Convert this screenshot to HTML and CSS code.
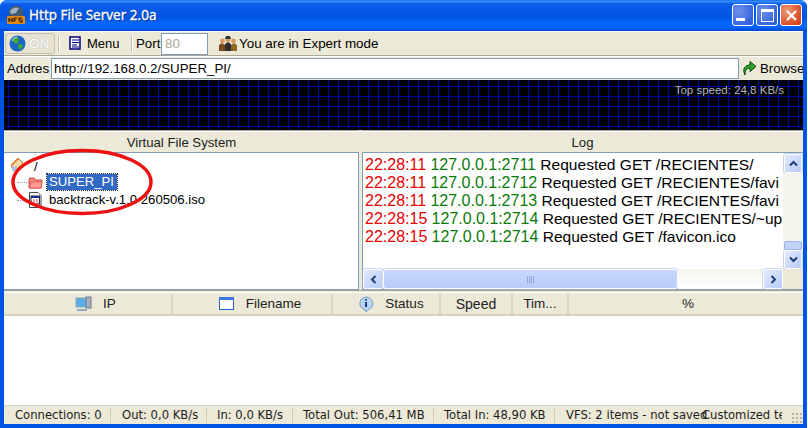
FILE: index.html
```html
<!DOCTYPE html>
<html lang="en">
<head>
<meta charset="utf-8">
<title>Http File Server 2.0a</title>
<link rel="stylesheet" href="styles.css">
</head>
<body>
<div class="window">
  <header class="titlebar">
    <svg class="hfs-logo" width="20" height="20" viewBox="0 0 20 20">
      <circle cx="10" cy="8" r="7.500" fill="#46586e"/>
      <path d="M4 6 Q8 1 13 3 L10 8 L5 9Z" fill="#9fb4c4"/>
      <rect x="1" y="11" width="18" height="8" rx="1" fill="#e08a10"/>
      <path d="M3 13v4M3 15h3M6 13v4M8 13v4M8 13h3M8 15h2M16 13h-3v2h3v2h-3" stroke="#3a1c00" stroke-width="1.200" fill="none"/>
    </svg>
    <span class="title">Http File Server 2.0a</span>
    <div class="caption-buttons">
      <button class="cap cap-blue"><span class="glyph-min"></span></button>
      <button class="cap cap-blue"><span class="glyph-max"></span></button>
      <button class="cap cap-red">
        <svg width="13" height="13" viewBox="0 0 13 13"><path d="M2 2 L11 11 M11 2 L2 11" stroke="#fff" stroke-width="2.200"/></svg>
      </button>
    </div>
  </header>

  <div class="body">
    <div class="toolbar">
      <div class="on-button">
        <svg width="17" height="17" viewBox="0 0 17 17">
          <circle cx="8.500" cy="8.500" r="8" fill="#1a66c8"/>
          <path d="M3 4 Q6 1 9 2 L10 6 L8 9 L5 8Z M9 10 L13 9 L14 12 L10 15Z" fill="#45a82f"/>
          <path d="M3 6 Q5 2 8 2" stroke="#bfe0ff" fill="none"/>
        </svg>
        <span class="on-label">ON</span>
      </div>
      <span class="sep"></span>
      <svg class="menu-icon" width="13" height="15" viewBox="0 0 13 15">
        <rect x="1" y="1" width="10" height="12" fill="#fff" stroke="#00007a" stroke-width="1.500"/>
        <path d="M3 4h7M3 6.500h7M3 9h5M3 11h7" stroke="#00007a" stroke-width="1.200"/>
      </svg>
      <span class="menu-label">Menu</span>
      <span class="sep"></span>
      <label class="port-label">Port</label>
      <div class="port-input">80</div>
      <svg class="expert-icon" width="18" height="16" viewBox="0 0 18 16">
        <path d="M0 15V9l3-2 3 2v6Z" fill="#7a4a18"/><circle cx="3.500" cy="5" r="2.400" fill="#d89a60"/>
        <path d="M6 15V8l3-2 3 2v7Z" fill="#2e2e2e"/><circle cx="9" cy="4" r="2.400" fill="#d89a60"/><path d="M6 3h6l-1-3H7Z" fill="#333"/>
        <path d="M12 15V9l3-2 3 2v6Z" fill="#8a6a20"/><circle cx="14.500" cy="5" r="2.400" fill="#d89a60"/>
      </svg>
      <span class="expert-label">You are in Expert mode</span>
    </div>

    <div class="address-bar">
      <span class="address-label">Addres</span>
      <div class="address-input">http://192.168.0.2/SUPER_PI/</div>
      <svg class="browse-icon" width="15" height="16" viewBox="0 0 15 16">
        <path d="M3 15 C0 9 3 5 8 5 V1.500 L14 6.500 L8 11.500 V8 C5 8 3 10 3 15Z" fill="#2da52d" stroke="#0a4a0a" stroke-width="1"/>
      </svg>
      <span class="browse-label">Browse</span>
    </div>

    <div class="graph"><span class="top-speed">Top speed: 24,8 KB/s</span></div>

    <div class="panes">
      <section class="pane pane-vfs">
        <h2 class="pane-title">Virtual File System</h2>
        <div class="tree">
          <div class="node root">
            <svg width="17" height="17" viewBox="0 0 17 17"><path d="M2 9 L9 2 L14 7 V8 L9 14 L3 12Z" fill="#f2d9a8" stroke="#c07a30"/><path d="M2 9 L9 2 L10 3 L3 10Z" fill="#e8843a"/><path d="M3 10v5l5 1v-5Z" fill="#a9c4e0"/></svg>
            <span class="node-text root-text">/</span>
          </div>
          <div class="node child">
            <span class="dots"></span>
            <svg width="15" height="13" viewBox="0 0 15 13"><path d="M1 3 L1 12 H13 L14 4 H7 L6 2 H2Z" fill="#f78a80" stroke="#d0403a"/><path d="M1.500 12 L3 6 H14 L13 12Z" fill="#ff9a90" stroke="#e0605a"/></svg>
            <span class="node-text selected">SUPER_PI</span>
          </div>
          <div class="node child">
            <span class="dots"></span>
            <svg width="14" height="16" viewBox="0 0 14 16"><path d="M1.500 .5 H10 L13 3.500 V15.500 H1.500Z" fill="#fff" stroke="#444"/><rect x="3" y="4" width="8.500" height="8" fill="#fff" stroke="#223"/><rect x="3" y="4" width="8.500" height="2" fill="#1a2a88"/><path d="M5 8h1.500M8 8h2M5 10h2M8.500 10h1.500" stroke="#c33" stroke-width="1"/></svg>
            <span class="node-text">backtrack-v.1.0 260506.iso</span>
          </div>
        </div>
        <svg class="highlight" width="146" height="70" viewBox="0 0 146 70">
          <ellipse cx="73" cy="35" rx="69" ry="31.500" fill="none" stroke="#ee1111" stroke-width="3.500"/>
        </svg>
      </section>
      <section class="pane pane-log">
        <h2 class="pane-title">Log</h2>
        <div class="log-box">
          <div class="log-main">
            <div class="log-lines">
              <div class="log-line"><span class="t">22:28:11</span> <span class="a">127.0.0.1:2711</span> Requested GET /RECIENTES/</div>
              <div class="log-line"><span class="t">22:28:11</span> <span class="a">127.0.0.1:2712</span> Requested GET /RECIENTES/favi</div>
              <div class="log-line"><span class="t">22:28:11</span> <span class="a">127.0.0.1:2713</span> Requested GET /RECIENTES/favi</div>
              <div class="log-line"><span class="t">22:28:15</span> <span class="a">127.0.0.1:2714</span> Requested GET /RECIENTES/~up</div>
              <div class="log-line"><span class="t">22:28:15</span> <span class="a">127.0.0.1:2714</span> Requested GET /favicon.ico</div>
            </div>
            <div class="vscroll">
              <div class="sb-btn"><svg width="9" height="7" viewBox="0 0 9 7"><path d="M1 5.500 L4.500 2 L8 5.500" fill="none" stroke="#1c3f78" stroke-width="2"/></svg></div>
              <div class="v-track"></div>
              <div class="v-thumb"></div>
              <div class="sb-btn"><svg width="9" height="7" viewBox="0 0 9 7"><path d="M1 1.500 L4.500 5 L8 1.500" fill="none" stroke="#1c3f78" stroke-width="2"/></svg></div>
            </div>
          </div>
          <div class="hscroll">
            <div class="sb-btn sb-btn-h"><svg width="7" height="9" viewBox="0 0 7 9"><path d="M5.500 1 L2 4.500 L5.500 8" fill="none" stroke="#1c3f78" stroke-width="2"/></svg></div>
            <div class="h-thumb"><span class="grip"></span></div>
            <div class="h-track"></div>
            <div class="sb-btn sb-btn-h"><svg width="7" height="9" viewBox="0 0 7 9"><path d="M1.500 1 L5 4.500 L1.500 8" fill="none" stroke="#1c3f78" stroke-width="2"/></svg></div>
            <div class="h-corner"></div>
          </div>
        </div>
      </section>
    </div>

    <div class="list-header">
      <div class="col col-ip">
        <svg width="17" height="16" viewBox="0 0 17 16"><rect x="1" y="2" width="11" height="9" fill="#5aaee8" stroke="#8aa"/><rect x="11" y="1" width="5" height="11" fill="#9fb2c4" stroke="#778"/><path d="M2 14h10" stroke="#9ab" stroke-width="2"/></svg>
        <span>IP</span>
      </div>
      <div class="col col-file">
        <svg width="15" height="13" viewBox="0 0 15 13"><rect x=".5" y=".5" width="14" height="12" fill="#fff" stroke="#2a62c8"/><rect x="0" y="0" width="15" height="3" fill="#3a78e0"/></svg>
        <span>Filename</span>
      </div>
      <div class="col col-status">
        <svg width="16" height="16" viewBox="0 0 16 16"><path d="M8 1a7 6.500 0 0 1 2 12.700L8 16l-1-2.300A7 6.500 0 0 1 8 1Z" fill="#b8d4f0" stroke="#7d9cc0"/><path d="M8 3v1.500M8 6v5" stroke="#123a8a" stroke-width="2"/></svg>
        <span>Status</span>
      </div>
      <div class="col col-speed"><span>Speed</span></div>
      <div class="col col-time"><span>Tim...</span></div>
      <div class="col col-pct"><span>%</span></div>
    </div>

    <div class="list-body"></div>

    <footer class="statusbar">
      <span class="st st-1">Connections: 0</span>
      <span class="st st-2">Out: 0,0 KB/s</span>
      <span class="st st-3">In: 0,0 KB/s</span>
      <span class="st st-4">Total Out: 506,41 MB</span>
      <span class="st st-5">Total In: 48,90 KB</span>
      <span class="st st-6">VFS: 2 items - not saved</span>
      <span class="st st-7">Customized te</span>
      <span class="grip-corner"></span>
    </footer>
  </div>
</div>
</body>
</html>
```

FILE: styles.css
```css
* { box-sizing: border-box; margin: 0; padding: 0; }
html, body { width: 808px; height: 428px; overflow: hidden; background: #fff; }
body { font-family: "Liberation Sans", Arial, sans-serif; font-size: 13.300px; color: #000; }

.window {
  width: 807px; height: 428px; display: flex; flex-direction: column;
  background: #0054e3; border-radius: 7px 7px 0 0; overflow: hidden;
}

.titlebar {
  height: 31px; flex: none; display: flex; align-items: center; padding: 0 5px 1px 6px;
  background: linear-gradient(#0a5ee4 0, #3d95ff 1px, #0a5de8 4px, #0056e0 18px, #0265f8 22px, #0365ff 27px, #0047cc 31px);
}
.hfs-logo { flex: none; }
.title {
  margin-left: 3px; font: 400 13.500px "Noto Sans", "Liberation Sans", sans-serif; color: #fff;
  text-shadow: 1px 1px 0 #0a2a90; -webkit-text-stroke: .3px #fff;
}
.caption-buttons { margin-left: auto; display: flex; gap: 2px; }
.cap {
  width: 22px; height: 22px; border: 1px solid #fff; border-radius: 3px;
  display: flex; align-items: center; justify-content: center; position: relative;
}
.cap-blue { background: radial-gradient(circle at 30% 30%, #6f92ee, #2f5fdc 80%); }
.cap-red { background: radial-gradient(circle at 30% 30%, #f09a78, #d8451c 80%); }
.glyph-min { width: 9px; height: 3px; background: #fff; align-self: flex-end; margin: 0 5px 4px 0; }
.glyph-max { width: 13px; height: 13px; border: 1px solid #fff; border-top-width: 3px; }

.body {
  flex: 1; min-height: 0; margin: 0 4px 4px 4px; background: #ece9d8;
  display: flex; flex-direction: column;
}

.toolbar {
  height: 25px; flex: none; display: flex; align-items: center; padding: 1px 0 0 0;
  border-bottom: 1px solid #aca899;
  box-shadow: inset 0 1px 0 #fff;
}
.on-button {
  width: 50px; height: 21px; margin-left: 1px; border: 1px solid #c4c1b0; border-radius: 3px;
  display: flex; align-items: center; padding-left: 3px; background: #e6e3d3;
}
.on-label { margin-left: 3px; color: #fff; font-size: 13.500px; text-shadow: 0 0 1px #aaa; }
.sep { width: 2px; height: 17px; flex: none; border-left: 1px solid #c5c2b2; border-right: 1px solid #fff; }
.on-button + .sep { margin-left: 3px; }
.menu-icon { margin-left: 9px; flex: none; }
.menu-label { margin-left: 5px; width: 33px; font-size: 13px; }
.menu-label + .sep { margin-left: 11px; }
.port-label { margin-left: 3px; width: 25px; }
.port-input {
  width: 47px; height: 22px; border: 1px solid #7f9db9; background: #fff; color: #a9a79a;
  padding-left: 3px; line-height: 20px; flex: none;
}
.expert-icon { margin-left: 11px; flex: none; }
.expert-label { margin-left: 2px; font-size: 13.400px; }

.address-bar {
  height: 24px; flex: none; display: flex; align-items: center; overflow: hidden;
  box-shadow: inset 0 1px 0 #fff;
}
.address-label { margin-left: 3px; width: 44px; overflow: hidden; flex: none; }
.address-input {
  width: 688px; height: 21px; flex: none; border: 1px solid #7f9db9; background: #fff;
  padding-left: 2px; line-height: 19px;
}
.browse-icon { margin-left: 3px; flex: none; }
.browse-label { margin-left: 3px; flex: none; }

.graph {
  height: 50px; flex: none; display: flex; justify-content: flex-end; align-items: flex-start;
  background-color: #000;
  background-image:
    linear-gradient(to right, #0000a0 1px, transparent 1px),
    linear-gradient(to bottom, #0000a0 1px, transparent 1px);
  background-size: 10px 10px;
  background-position: 4px 6px;
  padding: 3px 19px 0 0;
}
.top-speed { font-size: 11.500px; color: #b4b4b4; line-height: 14px; }

.panes { height: 161px; flex: none; display: flex; gap: 3px; border-bottom: 1px solid #aca899; }
.pane { display: flex; flex-direction: column; position: relative; min-width: 0; }
.pane-vfs { width: 355px; flex: none; }
.pane-log { flex: 1; }
.pane-title {
  height: 22px; flex: none; text-align: center; font-weight: 400; font-size: 13.200px; line-height: 23px;
  color: #222; border-top: 1px solid #aca899; box-shadow: inset 0 1px 0 #fff;
}
.tree {
  flex: 1; background: #fff; border: 1px solid #7f9db9; border-width: 1px 1px 1px 0; padding: 2px 0 0 5px;
}
.node { height: 18px; display: flex; align-items: center; white-space: nowrap; font-size: 13.150px; }
.root-text { margin-left: 6px; margin-top: 5px; }
.child { padding-left: 8px; }
.dots { width: 10px; border-top: 1px dotted #999; flex: none; margin-right: 1px; }
.child svg { flex: none; margin-right: 4px; }
.node-text { padding: 0 2px; line-height: 16px; }
.node:last-child .node-text { margin-left: 1px; }
.selected { background: #316ac5; color: #fff; outline: 1px dotted #222; padding: 0 3px 0 2px; }
.highlight { position: absolute; left: 5px; top: 17px; pointer-events: none; }

.log-box { flex: 1; min-height: 0; background: #fff; border: 1px solid #7f9db9; border-width: 1px 0 1px 1px; display: flex; flex-direction: column; }
.log-main { flex: 1; min-height: 0; display: flex; }
.log-lines { flex: 1; min-width: 0; padding: 3px 0 0 2px; overflow: hidden; }
.log-line { height: 18px; line-height: 18px; font-size: 15.550px; white-space: nowrap; overflow: hidden; }
.t { color: #e80000; font-size: 16px; }
.a { color: #0a7a0a; font-size: 16px; }

.vscroll { width: 20px; flex: none; display: flex; flex-direction: column; background: #f5f5ee; padding: 1px 1px 0; }
.sb-btn {
  width: 18px; height: 19px; flex: none; background: linear-gradient(135deg, #e2e9fd, #b8ccf8);
  border: 1px solid #fff; border-radius: 2px; display: flex; align-items: center; justify-content: center;
  box-shadow: 0 0 0 .5px #9fb4e0;
}
.v-track { flex: 1; background: #f5f5ee; }
.v-thumb { height: 9px; flex: none; background: #c1d3fb; border: 1px solid #9db4e8; border-radius: 2px; }

.hscroll { height: 20px; flex: none; display: flex; background: #f5f5ee; }
.sb-btn-h { width: 20px; height: 20px; }
.h-thumb {
  width: 295px; flex: none; background: linear-gradient(#c9d8fc, #b8ccfa); border: 1px solid #fff;
  border-radius: 3px; display: flex; align-items: center; justify-content: center;
  box-shadow: 0 0 0 .5px #9fb4e0;
}
.grip { width: 7px; height: 7px; background: repeating-linear-gradient(to right, #8ea8dc 0 1px, transparent 1px 2px); }
.h-track { flex: 1; background: linear-gradient(#f5f5ee, #fff); }
.h-corner { width: 20px; flex: none; background: #ece9d8; }

.list-header { height: 24px; flex: none; display: flex; align-items: center; margin-top: 1px; border-top: 1px solid #fff; border-bottom: 2px solid #d6d3c2; }
.col { height: 20px; display: flex; align-items: center; justify-content: center; color: #222; border-right: 2px solid #d8d5c6; font-size: 13.500px; }
.col-ip { width: 169px; gap: 11px; padding-left: 16px; }
.col-file { width: 160px; gap: 12px; padding-left: 16px; }
.col-status { width: 108px; gap: 11px; padding-left: 10px; }
.col-speed { width: 72px; font-size: 14px; }
.col-time { width: 56px; }
.col-pct { flex: 1; border-right: 0; padding-left: 4px; }

.list-body { flex: 1; min-height: 0; background: #fff; }

.statusbar {
  height: 19px; flex: none; display: flex; align-items: center; font: 11.600px "DejaVu Sans", "Liberation Sans", sans-serif;
  color: #1c1c1c; position: relative; overflow: hidden; white-space: nowrap; border-top: 1px solid #d6d3c2;
}
.st { flex: none; height: 15px; line-height: 15px; border-right: 1px solid #cfccbb; }
.st-1 { width: 107px; padding-left: 11px; }
.st-2 { width: 96px; padding-left: 11px; }
.st-3 { width: 86px; padding-left: 10px; }
.st-4 { width: 141px; padding-left: 10px; }
.st-5 { width: 121px; padding-left: 10px; }
.st-6 { width: 147px; padding-left: 11px; border-right: 0; overflow: visible; }
.st-7 { width: 80px; border-right: 0; overflow: hidden; }
.grip-corner {
  margin-left: auto; width: 12px; height: 12px; flex: none; align-self: flex-end;
  background-image: radial-gradient(circle, #b5b2a2 1px, transparent 1.200px);
  background-size: 4px 4px;
}
```
